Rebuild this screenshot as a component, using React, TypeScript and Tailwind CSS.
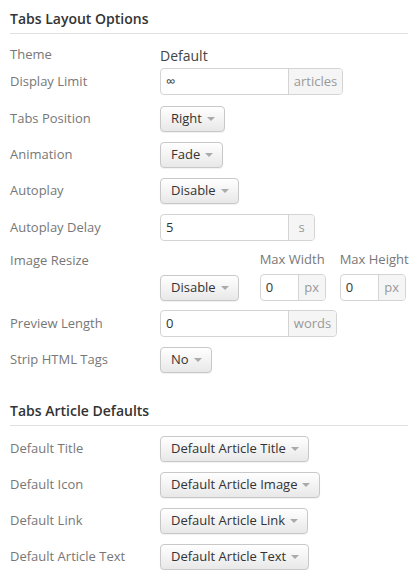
import type { ReactNode } from 'react';

const font = { fontFamily: '"Open Sans", "Liberation Sans", sans-serif' };

function Caret() {
  return (
    <span className="ml-[5px] inline-block h-0 w-0 border-x-[4px] border-t-[4px] border-x-transparent border-t-[#aaa]" />
  );
}

function Dropdown({ label }: { label: string }) {
  return (
    <button className="flex h-[26px] shrink-0 items-center whitespace-nowrap rounded-[4px] border border-[#c8c8c8] bg-gradient-to-b from-white to-[#e8e8e8] pl-[10px] pr-[9px] text-[13px] text-[#333] shadow-[0_1px_1px_rgba(0,0,0,0.06)]">
      {label}
      <Caret />
    </button>
  );
}

function AddonInput({ value, addon, width, addonWidth }: { value: string; addon: string; width: number; addonWidth: number }) {
  return (
    <div className="flex h-[27px] shrink-0 rounded-[4px] border border-[#d4d4d4] bg-white" style={{ width }}>
      <div className="flex flex-1 items-center pl-[5px] text-[13px] text-[#333]">{value}</div>
      <div
        className="flex items-center justify-center rounded-r-[3px] border-l border-[#d4d4d4] bg-[#f5f5f5] text-[13px] text-[#999]"
        style={{ width: addonWidth }}
      >
        {addon}
      </div>
    </div>
  );
}

function Row({ label, children, className = '' }: { label: string; children: ReactNode; className?: string }) {
  return (
    <div className={`flex items-center ${className}`}>
      <div className="w-[150px] shrink-0 text-[13px] text-[#777]">{label}</div>
      {children}
    </div>
  );
}

function Heading({ children }: { children: ReactNode }) {
  return (
    <div className="border-b border-[#e0e0e0] pb-[4px] text-[14px] font-semibold leading-[20px] text-[#333]">{children}</div>
  );
}

export default function App() {
  return (
    <div className="w-[415px] bg-white pl-[10px] pr-[7px] pt-[9px]" style={font}>
      <Heading>Tabs Layout Options</Heading>

      <Row label="Theme" className="mt-[12px] h-[18px]">
        <div className="text-[14px] text-[#444]">Default</div>
      </Row>
      <Row label="Display Limit" className="mt-[4px]">
        <AddonInput value="∞" addon="articles" width={183} addonWidth={54} />
      </Row>
      <Row label="Tabs Position" className="mt-[11px]">
        <Dropdown label="Right" />
      </Row>
      <Row label="Animation" className="mt-[10px]">
        <Dropdown label="Fade" />
      </Row>
      <Row label="Autoplay" className="mt-[10px]">
        <Dropdown label="Disable" />
      </Row>
      <Row label="Autoplay Delay" className="mt-[10px]">
        <AddonInput value="5" addon="s" width={155} addonWidth={26} />
      </Row>

      <div className="mt-[9px] flex">
        <div className="w-[150px] shrink-0 pt-[1px] text-[13px] leading-[18px] text-[#777]">Image Resize</div>
        <div className="flex items-end">
          <Dropdown label="Disable" />
          <div className="ml-[21px] flex shrink-0 flex-col">
            <div className="mb-[6px] whitespace-nowrap text-[13px] leading-[18px] text-[#777]">Max Width</div>
            <AddonInput value="0" addon="px" width={66} addonWidth={27} />
          </div>
          <div className="ml-[14px] flex shrink-0 flex-col">
            <div className="mb-[6px] whitespace-nowrap text-[13px] leading-[18px] text-[#777]">Max Height</div>
            <AddonInput value="0" addon="px" width={66} addonWidth={27} />
          </div>
        </div>
      </div>

      <Row label="Preview Length" className="mt-[9px]">
        <AddonInput value="0" addon="words" width={177} addonWidth={48} />
      </Row>
      <Row label="Strip HTML Tags" className="mt-[10px]">
        <Dropdown label="No" />
      </Row>

      <div className="mt-[28px]">
        <Heading>Tabs Article Defaults</Heading>
      </div>

      <Row label="Default Title" className="mt-[10px]">
        <Dropdown label="Default Article Title" />
      </Row>
      <Row label="Default Icon" className="mt-[10px]">
        <Dropdown label="Default Article Image" />
      </Row>
      <Row label="Default Link" className="mt-[10px]">
        <Dropdown label="Default Article Link" />
      </Row>
      <Row label="Default Article Text" className="mt-[10px]">
        <Dropdown label="Default Article Text" />
      </Row>
    </div>
  );
}
